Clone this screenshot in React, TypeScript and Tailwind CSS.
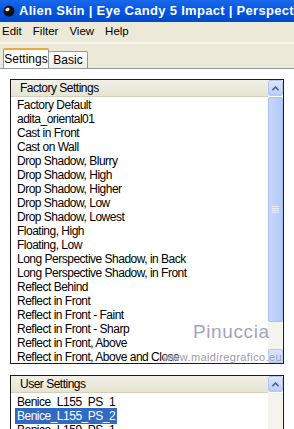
import React from "react";

const factory = [
  "Factory Default",
  "adita_oriental01",
  "Cast in Front",
  "Cast on Wall",
  "Drop Shadow, Blurry",
  "Drop Shadow, High",
  "Drop Shadow, Higher",
  "Drop Shadow, Low",
  "Drop Shadow, Lowest",
  "Floating, High",
  "Floating, Low",
  "Long Perspective Shadow, in Back",
  "Long Perspective Shadow, in Front",
  "Reflect Behind",
  "Reflect in Front",
  "Reflect in Front - Faint",
  "Reflect in Front - Sharp",
  "Reflect in Front, Above",
  "Reflect in Front, Above and Close",
];

const user = ["Benice_L155_PS_1", "Benice_L155_PS_2", "Benice_L159_PS_1"];

const UpArrow = () => (
  <div className="w-[15px] h-[16px] rounded-[2px] border border-[#b5c8f5] bg-gradient-to-b from-[#dce7fd] to-[#b9cdfa] flex items-center justify-center">
    <svg width="7" height="5" viewBox="0 0 7 5">
      <path d="M0.5 4.2 L3.5 1 L6.5 4.2" fill="none" stroke="#4d6185" strokeWidth="1.6" />
    </svg>
  </div>
);

const ListHeader = ({ title }: { title: string }) => (
  <div className="h-[17px] flex">
    <div className="flex-1 bg-gradient-to-b from-[#f1f0e6] to-[#e7e4d3] border-b border-[#d3cfbd] pl-[9px] leading-[17px] whitespace-nowrap">
      {title}
    </div>
    <UpArrow />
  </div>
);

export default function App() {
  return (
    <div className="relative w-[294px] h-[429px] overflow-hidden bg-white font-['Liberation_Sans',Arial,sans-serif] text-[12px] text-black">
      <header className="h-[22px] bg-gradient-to-b from-[#1a68ea] via-[#0055e4] to-[#0349c9] flex items-center pl-[3px] gap-[4px]">
        <svg width="12" height="12" viewBox="0 0 12 12" className="shrink-0">
          <circle cx="6" cy="6" r="5.5" fill="#111" />
          <ellipse cx="4.5" cy="4.5" rx="2.2" ry="1.6" fill="#fff" transform="rotate(-30 4.5 4.5)" />
        </svg>
        <span className="text-white font-bold text-[13px] tracking-[0.3px] whitespace-nowrap">
          Alien Skin | Eye Candy 5 Impact | Perspective Shadow
        </span>
      </header>

      <nav className="h-[22px] bg-[#ece9d8] border-b-2 border-[#f7f5ec] flex items-center gap-[11px] pl-[2px] text-[11.5px]">
        <span>Edit</span>
        <span>Filter</span>
        <span>View</span>
        <span>Help</span>
      </nav>

      <div className="h-[24px] bg-[#ece9d8] flex items-end pl-[3px]">
        <div className="h-[20px] w-[46px] bg-white border-x border-[#919b9c] border-t-2 border-t-[#f0a73a] flex items-center justify-center rounded-t-[2px]">
          Settings
        </div>
        <div className="h-[17px] w-[39px] bg-gradient-to-b from-white to-[#ecebe4] border-r border-t border-[#919b9c] flex items-center justify-center rounded-t-[2px]">
          Basic
        </div>
      </div>

      <main className="border-t border-[#919b9c] bg-white pt-[10px] px-[10px] flex flex-col gap-[11px] tracking-[-0.5px]">
        <section className="h-[285px] border border-[#1c1c1c] flex flex-col">
          <ListHeader title="Factory Settings" />
          <div className="flex-1 flex min-h-0">
            <ul className="flex-1 overflow-hidden pt-[1px]">
              {factory.map((f) => (
                <li key={f} className="h-[14px] leading-[14px] pl-[6px] whitespace-nowrap">
                  {f}
                </li>
              ))}
            </ul>
            <div className="w-[15px] flex flex-col bg-[#f4f3ee]">
              <div className="h-[225px] rounded-[2px] border border-[#a9c0f3] bg-gradient-to-r from-[#c7d6fc] via-[#bcd0fb] to-[#b5c9f8] flex flex-col items-center justify-center gap-[1px]">
                <span className="w-[7px] h-px bg-[#e9efff]" />
                <span className="w-[7px] h-px bg-[#e9efff]" />
                <span className="w-[7px] h-px bg-[#e9efff]" />
                <span className="w-[7px] h-px bg-[#e9efff]" />
              </div>
              <div className="flex-1" />
              <div className="h-[14px] rounded-[2px] border border-[#b5c8f5] bg-gradient-to-b from-[#dce7fd] to-[#b9cdfa]" />
            </div>
          </div>
        </section>

        <section className="h-[60px] border border-[#1c1c1c] border-b-0 flex flex-col">
          <ListHeader title="User Settings" />
          <div className="flex-1 flex min-h-0">
            <ul className="flex-1 overflow-hidden pt-[2px]">
              {user.map((u, i) => (
                <li key={u} className="h-[14px] leading-[14px] pl-[4px] whitespace-nowrap">
                  <span className={i === 1 ? "bg-[#316ac5] text-white px-[2px] py-[1px]" : "px-[2px]"}>{u}</span>
                </li>
              ))}
            </ul>
            <div className="w-[15px] bg-[#f4f3ee]" />
          </div>
        </section>
      </main>

      <div className="absolute left-[193px] top-[322px] text-[19px] leading-none text-[#a3a3c0] tracking-[0.6px] [text-shadow:0_0_2px_#fff]">
        Pinuccia
      </div>
      <div className="absolute left-[163px] top-[352px] text-[11px] leading-none text-[#9a9ab0] tracking-[0.4px] [text-shadow:0_0_2px_#fff]">
        www.maidiregrafico.eu
      </div>
    </div>
  );
}
